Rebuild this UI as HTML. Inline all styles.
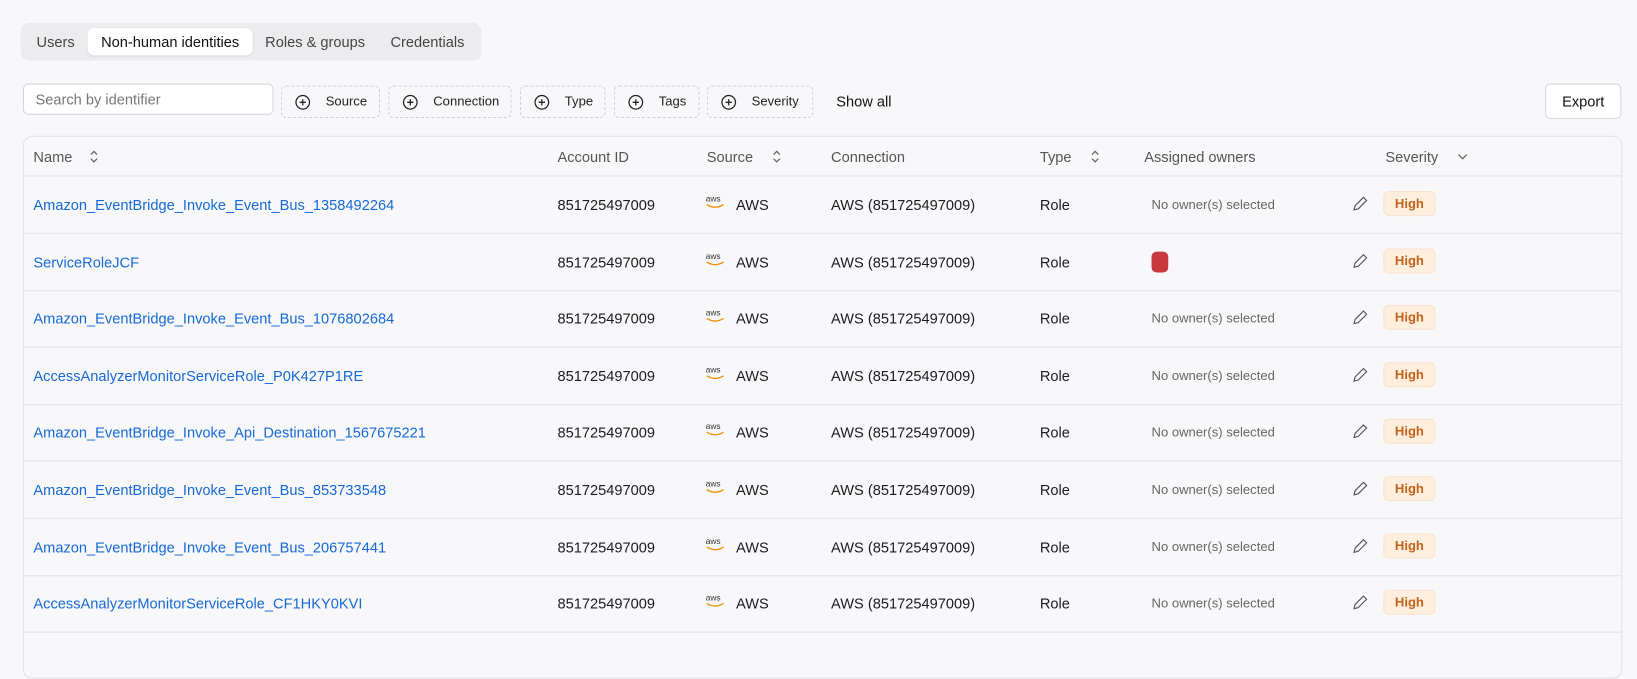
<!DOCTYPE html>
<html><head><style>
*{box-sizing:border-box;margin:0;padding:0}
body{width:1637px;height:635px;overflow:hidden;background:#f8f8fa;font-family:"Liberation Sans",sans-serif;font-size:14px;color:#1c1c1e;position:relative}
#w{position:absolute;left:0;top:0;width:1568px;height:608px;transform:scale(1.044);transform-origin:0 0}
.tabs{position:absolute;left:20px;top:22px;width:441px;height:36px;background:#ececee;border-radius:8px}
.tab{position:absolute;top:5px;height:26px;line-height:26px;font-size:14px;color:#444}
.tab.act{background:#fff;border-radius:6px;color:#111;box-shadow:0 1px 2px rgba(0,0,0,.08)}
.search{position:absolute;left:22px;top:80px;width:240px;height:30px;border:1px solid #d6d6da;border-radius:5px;background:#fff;padding:0 11px;line-height:28px;color:#777;font-size:14px}
.chip{position:absolute;top:82px;height:31px;border:1px dashed #cfcfd4;border-radius:5px;font-size:12.5px;line-height:29px;color:#222;padding-left:42px}
.chip svg{position:absolute;left:12px;top:7px}
.showall{position:absolute;left:801px;top:89px;font-size:14px;color:#111}
.export{position:absolute;left:1480px;top:80px;width:73px;height:34px;border:1px solid #d6d6da;border-radius:5px;background:#fff;line-height:32px;text-align:center;font-size:14px;color:#111}
.table{position:absolute;left:22px;top:130px;width:1532px;height:520px;border:1px solid #e3e3e7;border-radius:9px;background:#f8f8fa}
.hdr{position:absolute;top:0;left:0;right:0;height:38px;border-bottom:1px solid #e3e3e7}
.h{position:absolute;top:11px;font-size:14px;color:#555}
.row{position:absolute;left:0;right:0;height:55px;border-bottom:1px solid #e3e3e7}
.c{position:absolute;top:19px;font-size:14px}
.name{color:#1669d6}
.own{color:#666;font-size:12.5px;top:20px}
.high{position:absolute;left:1303px;top:15px;width:48px;height:22px;background:#fdeedd;border-radius:4px;color:#c2621a;font-weight:bold;font-size:12.5px;text-align:center;line-height:22px;box-shadow:0 0 0 1px #fbe3cb}
.aws{position:absolute;left:653px;top:18px;font-size:8px;color:#333;line-height:8px}
</style></head><body><div id="w">
<div class="tabs">
<div class="tab" style="left:15px">Users</div>
<div class="tab act" style="left:64px;width:158px;text-align:center">Non-human identities</div>
<div class="tab" style="left:234px">Roles &amp; groups</div>
<div class="tab" style="left:354px">Credentials</div>
</div>
<div class="search">Search by identifier</div>
<div class="chip" style="left:269px;width:95px"><svg width="16" height="16"><circle cx="8" cy="8" r="6.5" fill="none" stroke="#222" stroke-width="1.2"/><path d="M8 5v6M5 8h6" stroke="#222" stroke-width="1.2"/></svg>Source</div>
<div class="chip" style="left:372px;width:118px"><svg width="16" height="16"><circle cx="8" cy="8" r="6.5" fill="none" stroke="#222" stroke-width="1.2"/><path d="M8 5v6M5 8h6" stroke="#222" stroke-width="1.2"/></svg>Connection</div>
<div class="chip" style="left:498px;width:82px"><svg width="16" height="16"><circle cx="8" cy="8" r="6.5" fill="none" stroke="#222" stroke-width="1.2"/><path d="M8 5v6M5 8h6" stroke="#222" stroke-width="1.2"/></svg>Type</div>
<div class="chip" style="left:588px;width:82px"><svg width="16" height="16"><circle cx="8" cy="8" r="6.5" fill="none" stroke="#222" stroke-width="1.2"/><path d="M8 5v6M5 8h6" stroke="#222" stroke-width="1.2"/></svg>Tags</div>
<div class="chip" style="left:677px;width:102px"><svg width="16" height="16"><circle cx="8" cy="8" r="6.5" fill="none" stroke="#222" stroke-width="1.2"/><path d="M8 5v6M5 8h6" stroke="#222" stroke-width="1.2"/></svg>Severity</div>
<div class="showall">Show all</div>
<div class="export">Export</div>
<div class="table">
<div class="hdr">
<div class="h" style="left:9px">Name</div><svg style="position:absolute;left:62px;top:12px" width="10" height="14"><path d="M2 5l3-3 3 3M2 9l3 3 3-3" fill="none" stroke="#666" stroke-width="1.2"/></svg>
<div class="h" style="left:511px">Account ID</div>
<div class="h" style="left:654px">Source</div><svg style="position:absolute;left:716px;top:12px" width="10" height="14"><path d="M2 5l3-3 3 3M2 9l3 3 3-3" fill="none" stroke="#666" stroke-width="1.2"/></svg>
<div class="h" style="left:773px">Connection</div>
<div class="h" style="left:973px">Type</div><svg style="position:absolute;left:1021px;top:12px" width="10" height="14"><path d="M2 5l3-3 3 3M2 9l3 3 3-3" fill="none" stroke="#666" stroke-width="1.2"/></svg>
<div class="h" style="left:1073px">Assigned owners</div>
<div class="h" style="left:1304px">Severity</div><svg style="position:absolute;left:1372px;top:14px" width="12" height="10"><path d="M2 3l4 4 4-4" fill="none" stroke="#666" stroke-width="1.2"/></svg>
</div>
</div>
</div>
<script>
const names=["Amazon_EventBridge_Invoke_Event_Bus_1358492264","ServiceRoleJCF","Amazon_EventBridge_Invoke_Event_Bus_1076802684","AccessAnalyzerMonitorServiceRole_P0K427P1RE","Amazon_EventBridge_Invoke_Api_Destination_1567675221","Amazon_EventBridge_Invoke_Event_Bus_853733548","Amazon_EventBridge_Invoke_Event_Bus_206757441","AccessAnalyzerMonitorServiceRole_CF1HKY0KVI"];
let h="";
names.forEach((n,i)=>{
 const top=38+i*54.6;
 const own=i==1?'<div style="position:absolute;left:1080px;top:17px;width:16px;height:20px;background:#c9383f;border-radius:5px"></div>':'<div class="c own" style="left:1080px">No owner(s) selected</div>';
 h+=`<div class="row" style="top:${top}px"><div class="c name" style="left:9px">${n}</div><div class="c" style="left:511px">851725497009</div><div class="aws">aws<br><svg width="18" height="6"><path d="M1 1q8 5 16 0" fill="none" stroke="#f29100" stroke-width="1.3"/></svg></div><div class="c" style="left:682px">AWS</div><div class="c" style="left:773px">AWS (851725497009)</div><div class="c" style="left:973px">Role</div>${own}<svg style="position:absolute;left:1272px;top:18px" width="16" height="16"><path d="M2 14l1-4 8-8 3 3-8 8z" fill="none" stroke="#555" stroke-width="1.1"/></svg><div class="high">High</div></div>`;
});
document.querySelector('.table').insertAdjacentHTML('beforeend',h);
</script>
</body></html>
